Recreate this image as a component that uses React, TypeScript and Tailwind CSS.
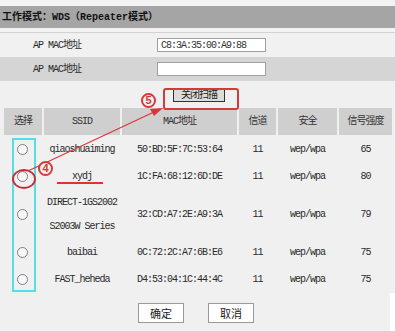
import React from "react";

const mono = { fontFamily: '"Liberation Mono", "Noto Sans CJK SC", monospace' };

const rows = [
  { ssid: ["qiaoshuaiming"], mac: "50:BD:5F:7C:53:64", ch: "11", sec: "wep/wpa", sig: "65", h: "h-[27px]" },
  { ssid: ["xydj"], mac: "1C:FA:68:12:6D:DE", ch: "11", sec: "wep/wpa", sig: "80", h: "h-[27px]" },
  { ssid: ["DIRECT-1GS2002", "S2003W Series"], mac: "32:CD:A7:2E:A9:3A", ch: "11", sec: "wep/wpa", sig: "79", h: "h-[49px]" },
  { ssid: ["baibai"], mac: "0C:72:2C:A7:6B:E6", ch: "11", sec: "wep/wpa", sig: "75", h: "h-[27px]" },
  { ssid: ["FAST_heheda"], mac: "D4:53:04:1C:44:4C", ch: "11", sec: "wep/wpa", sig: "75", h: "h-[27px]" },
];

const headers = ["选择", "SSID", "MAC地址", "信道", "安全", "信号强度"];

export default function App() {
  return (
    <div
      className="relative w-[395px] h-[331px] overflow-hidden bg-[#f0f0f0] text-[10px] tracking-[-1px] text-[#2a2a2a]"
      style={mono}
    >
      <div className="h-[6px] bg-[#f3f3f3]" />
      <div className="h-[22px] bg-[#a5a5a5] flex items-center pl-[2px] font-bold text-[#111] tracking-normal">
        工作模式：WDS（Repeater模式）
      </div>
      <div className="h-[4px] bg-[#f3f3f3]" />
      <div className="h-[1px] bg-[#d2d2d2]" />
      <div className="h-[24px] flex items-center pl-[33px] bg-[#f1f1f1]">
        <div className="w-[124px]">AP MAC地址</div>
        <div className="w-[109px] h-[14px] bg-white border border-[#a0a0a0] flex items-center pl-[3px] text-[#333]">
          C8:3A:35:00:A9:88
        </div>
      </div>
      <div className="h-[24px] flex items-center pl-[33px] bg-[#d5d5d5]">
        <div className="w-[124px]">AP MAC地址</div>
        <div className="w-[109px] h-[14px] bg-white border border-[#a0a0a0]" />
      </div>
      <div className="h-[27px] flex items-center pl-[173px] pt-[1px]">
        <div className="w-[52px] h-[13px] bg-[#dcdcdc] border border-[#333] flex items-center justify-center text-[#222]">
          关闭扫描
        </div>
      </div>
      <div className="ml-[4px] grid grid-cols-[38px_76px_115px_37px_59px_53px] gap-x-[2px]">
        {headers.map((h) => (
          <div key={h} className="h-[27px] bg-[#cfcfcf] flex items-center justify-center text-[#333]">
            {h}
          </div>
        ))}
      </div>
      <div className="h-[1px]" />
      {rows.map((r, i) => (
        <div key={i} className={`ml-[4px] grid grid-cols-[38px_76px_115px_37px_59px_53px] gap-x-[2px] ${r.h}`}>
          <div className="flex items-center justify-center pr-[1px]">
            <div className="w-[11px] h-[11px] rounded-full border border-[#7a7e84] bg-[#f7f7f7]" />
          </div>
          <div className="flex flex-col items-center justify-center gap-[12px]">
            {r.ssid.map((s) => (
              <div key={s} className="leading-[12px] whitespace-nowrap">{s}</div>
            ))}
          </div>
          <div className="flex items-center justify-center">{r.mac}</div>
          <div className="flex items-center justify-center">{r.ch}</div>
          <div className="flex items-center justify-center">{r.sec}</div>
          <div className="flex items-center justify-center">{r.sig}</div>
        </div>
      ))}
      <div className="flex gap-[24px] pl-[138px] pt-[10px] tracking-normal" style={{ fontFamily: '"Noto Sans CJK SC", sans-serif' }}>
        <div className="w-[46px] h-[20px] bg-white border border-[#9a9a9a] flex items-center justify-center text-[11px] text-[#222]">
          确定
        </div>
        <div className="w-[46px] h-[20px] bg-white border border-[#9a9a9a] flex items-center justify-center text-[11px] text-[#222]">
          取消
        </div>
      </div>

      {/* annotations */}
      <div className="absolute left-[390px] top-[293px] w-[5px] h-[38px] bg-white" />
      <div className="absolute left-[12px] top-[138px] w-[24px] h-[154px] border-2 border-[#56dde6]" />
      <div className="absolute left-[163px] top-[88px] w-[76px] h-[22px] border-2 border-[#d43a3a] rounded-[3px]" />
      <svg className="absolute left-0 top-0" width="395" height="331" viewBox="0 0 395 331">
        <ellipse cx="24" cy="179" rx="11" ry="9" fill="none" stroke="#c8282e" strokeWidth="1.8" />
        <line x1="28" y1="171" x2="154" y2="112" stroke="#d9363b" strokeWidth="1.2" />
        <polygon points="163,108 150,109 154,116" fill="#d9363b" />
        <line x1="57" y1="183" x2="103" y2="183" stroke="#d33" strokeWidth="2" />
      </svg>
      <div
        className="absolute left-[141px] top-[93px] w-[15px] h-[15px] rounded-full border-2 border-[#d43a3a] flex items-center justify-center text-[#d43a3a] text-[11px] font-bold tracking-normal bg-[#f0f0f0]"
        style={{ fontFamily: '"Liberation Sans", sans-serif' }}
      >
        5
      </div>
      <div
        className="absolute left-[38px] top-[161px] w-[15px] h-[15px] rounded-full border-2 border-[#d43a3a] flex items-center justify-center text-[#d43a3a] text-[11px] font-bold tracking-normal bg-[#f0f0f0]"
        style={{ fontFamily: '"Liberation Sans", sans-serif' }}
      >
        4
      </div>
    </div>
  );
}
